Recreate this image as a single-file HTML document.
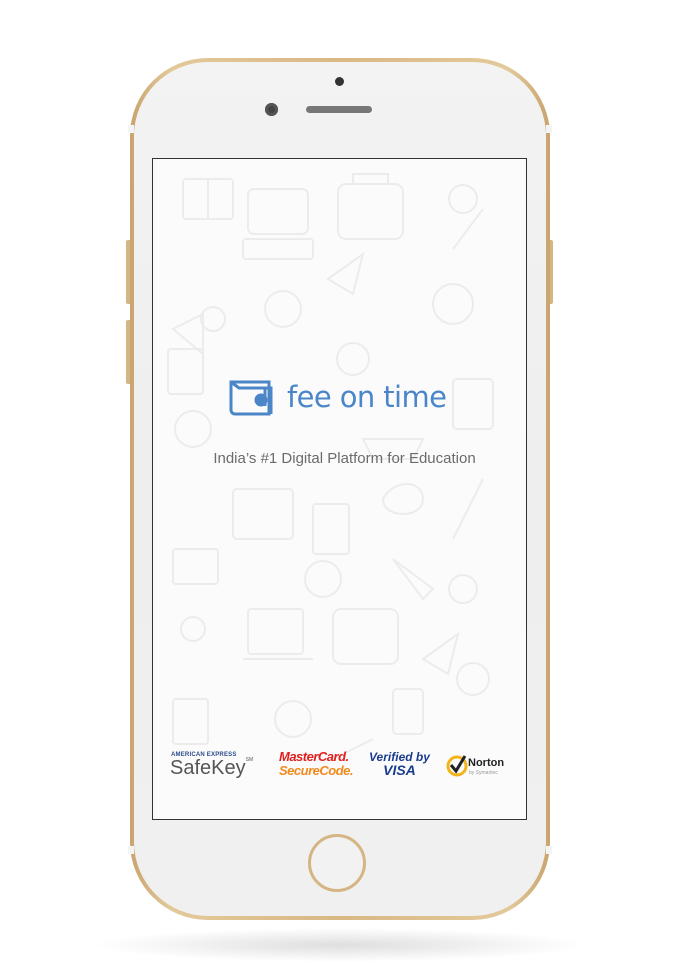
<!DOCTYPE html>
<html><head><meta charset="utf-8"><style>
html,body{margin:0;padding:0;background:#fff;width:676px;height:978px;overflow:hidden;font-family:"Liberation Sans",sans-serif}
.shadow{position:absolute;left:90px;top:928px;width:500px;height:34px;border-radius:50%;background:radial-gradient(ellipse at center,rgba(0,0,0,.13),rgba(0,0,0,0) 70%)}
.gold{position:absolute;left:130px;top:58px;width:420px;height:862px;border-radius:78px;background:linear-gradient(90deg,#c9a46e,#e3c99a 10%,#d9b884 50%,#e3c99a 90%,#c9a46e)}
.btn{position:absolute;background:#d5b583;border-radius:2px}
.body{position:absolute;left:134px;top:62px;width:412px;height:854px;border-radius:74px;background:linear-gradient(180deg,#f3f3f3,#eeeeee 50%,#f0f0f0)}
.band{position:absolute;height:8px;background:#f4f4f4}
.screen{position:absolute;left:152px;top:158px;width:373px;height:660px;border:1.5px solid #333;background:#fbfbfb;overflow:hidden}
.home{position:absolute;left:308px;top:834px;width:58px;height:58px;border-radius:50%;border:3px solid #d5b583;background:#f2f2f2;box-sizing:border-box}
.doodle{position:absolute;stroke:#ececec;fill:none;stroke-width:2}
</style></head><body>
<div class="shadow"></div>
<div class="btn" style="left:126px;top:240px;width:6px;height:64px"></div>
<div class="btn" style="left:126px;top:320px;width:6px;height:64px"></div>
<div class="btn" style="left:548px;top:240px;width:5px;height:64px"></div>
<div class="gold"></div>
<div class="band" style="left:128px;top:125px;width:6px"></div>
<div class="band" style="left:546px;top:125px;width:6px"></div>
<div class="band" style="left:128px;top:846px;width:6px"></div>
<div class="band" style="left:546px;top:846px;width:6px"></div>
<div class="body"></div>
<div style="position:absolute;left:335px;top:77px;width:9px;height:9px;border-radius:50%;background:#333"></div>
<div style="position:absolute;left:265px;top:103px;width:13px;height:13px;border-radius:50%;background:#444;box-shadow:inset 0 0 0 3px #555"></div>
<div style="position:absolute;left:306px;top:106px;width:66px;height:7px;border-radius:4px;background:#777"></div>
<div class="screen">
<svg class="doodle" width="373" height="660" viewBox="0 0 373 660">
<rect x="30" y="20" width="50" height="40" rx="3"/><path d="M55 20v40"/>
<rect x="95" y="30" width="60" height="45" rx="6"/><rect x="90" y="80" width="70" height="20" rx="3"/>
<rect x="185" y="25" width="65" height="55" rx="8"/><path d="M200 25v-10h35v10"/>
<circle cx="310" cy="40" r="14"/><path d="M300 90l30-40"/>
<path d="M175 120l35-25-10 40z"/><circle cx="130" cy="150" r="18"/>
<circle cx="300" cy="145" r="20"/><path d="M20 170l30-15v40z"/>
<rect x="15" y="190" width="35" height="45" rx="3"/><circle cx="60" cy="160" r="12"/>
<circle cx="200" cy="200" r="16"/><path d="M210 280h60l-10 20h-40z"/>
<rect x="300" y="220" width="40" height="50" rx="4"/><circle cx="40" cy="270" r="18"/>
<rect x="80" y="330" width="60" height="50" rx="4"/><rect x="160" y="345" width="36" height="50" rx="3"/>
<path d="M230 340c10-20 40-20 40 0s-40 20-40 0z"/><path d="M300 380l30-60"/>
<rect x="20" y="390" width="45" height="35" rx="3"/><circle cx="170" cy="420" r="18"/>
<path d="M240 400l40 30-10 10z"/><circle cx="310" cy="430" r="14"/>
<rect x="95" y="450" width="55" height="45" rx="3"/><path d="M90 500h70"/>
<rect x="180" y="450" width="65" height="55" rx="8"/><circle cx="40" cy="470" r="12"/>
<path d="M270 500l35-25-10 40z"/><circle cx="320" cy="520" r="16"/>
<rect x="20" y="540" width="35" height="45" rx="3"/><circle cx="140" cy="560" r="18"/>
<rect x="240" y="530" width="30" height="45" rx="4"/><path d="M180 600l40-20"/>
</svg>
<div style="position:absolute;left:76px;top:219px;width:46px;height:38px">
<svg width="46" height="38" viewBox="0 0 46 38" fill="none" stroke="#4a86c8" stroke-width="3" style="overflow:visible">
<path d="M2 4h38v32H6a4 4 0 0 1-4-4z"/><path d="M2 4l8 6h32v26"/><circle cx="32" cy="22" r="5" fill="#4a86c8"/><path d="M36 10v18" />
</svg></div>
<div style="position:absolute;left:134px;top:221px;font-family:'DejaVu Sans',sans-serif;font-size:29px;color:#4a86c8;letter-spacing:-0.6px">fee on time</div>
<div style="position:absolute;left:5px;width:373px;top:291px;text-align:center;font-size:15px;color:#6b6b6b">India’s #1 Digital Platform for Education</div>
<div style="position:absolute;left:18px;top:593px;font-size:6px;font-weight:bold;color:#2a4a8a;letter-spacing:.2px">AMERICAN EXPRESS</div>
<div style="position:absolute;left:17px;top:598px;font-size:20px;color:#555">SafeKey<span style="font-size:5px;vertical-align:top">SM</span></div>
<div style="position:absolute;left:126px;top:591px;font-size:13px;font-weight:bold;font-style:italic;color:#e0201e;letter-spacing:-.5px;line-height:14px">MasterCard.<br><span style="color:#f08a1c">SecureCode.</span></div>
<div style="position:absolute;left:216px;top:592px;font-size:12px;font-weight:bold;font-style:italic;color:#1a3c8e;line-height:13px;text-align:center">Verified by<br><span style="font-size:14px">VISA</span></div>
<svg style="position:absolute;left:293px;top:596px" width="22" height="22" viewBox="0 0 22 22"><circle cx="11" cy="11" r="9" fill="none" stroke="#f3b41b" stroke-width="3"/><path d="M5 10l5 6 9-15" fill="none" stroke="#222" stroke-width="3"/></svg>
<div style="position:absolute;left:315px;top:598px;font-size:11px;font-weight:bold;color:#222">Norton</div>
<div style="position:absolute;left:316px;top:611px;font-size:5px;color:#999">by Symantec</div>
</div>
<div class="home"></div>
</body></html>
